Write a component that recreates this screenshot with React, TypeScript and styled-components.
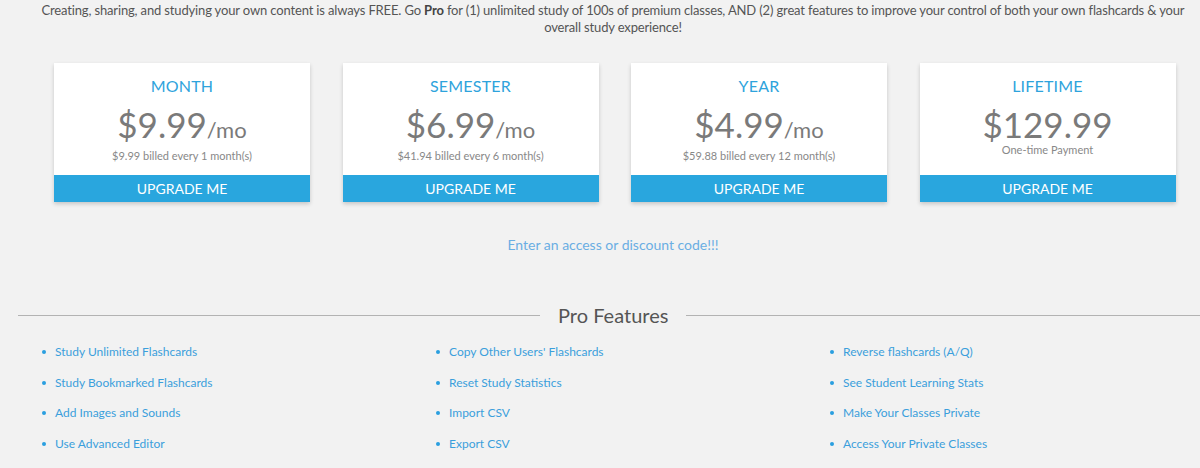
import styled, { createGlobalStyle } from 'styled-components'

const GlobalStyle = createGlobalStyle`
  html, body {
    margin: 0;
    padding: 0;
    background: #f2f2f2;
    overflow: hidden;
  }
  body {
    font-family: Lato, "Open Sans", Arial, sans-serif;
    color: #555;
  }
`

interface Plan {
  name: string
  price: string
  unit?: string
  note: string
}

const plans: Plan[] = [
  { name: 'MONTH', price: '$9.99', unit: '/mo', note: '$9.99 billed every 1 month(s)' },
  { name: 'SEMESTER', price: '$6.99', unit: '/mo', note: '$41.94 billed every 6 month(s)' },
  { name: 'YEAR', price: '$4.99', unit: '/mo', note: '$59.88 billed every 12 month(s)' },
  { name: 'LIFETIME', price: '$129.99', note: 'One-time Payment' },
]

const features: string[][] = [
  ['Study Unlimited Flashcards', 'Study Bookmarked Flashcards', 'Add Images and Sounds', 'Use Advanced Editor'],
  ["Copy Other Users' Flashcards", 'Reset Study Statistics', 'Import CSV', 'Export CSV'],
  ['Reverse flashcards (A/Q)', 'See Student Learning Stats', 'Make Your Classes Private', 'Access Your Private Classes'],
]

export default function App() {
  return (
    <>
      <GlobalStyle />
      <Page>
        <Intro>
          Creating, sharing, and studying your own content is always FREE. Go <b>Pro</b> for (1) unlimited
          study of 100s of premium classes, AND (2) great features to improve your control of both your own
          flashcards &amp; your overall study experience!
        </Intro>

        <PlanRow>
          {plans.map(plan => (
            <PlanCard key={plan.name}>
              <PlanBody>
                <PlanName>{plan.name}</PlanName>
                <Price>
                  {plan.price}
                  {plan.unit && <PriceUnit>{plan.unit}</PriceUnit>}
                </Price>
                <BillNote>{plan.note}</BillNote>
              </PlanBody>
              <UpgradeButton>UPGRADE ME</UpgradeButton>
            </PlanCard>
          ))}
        </PlanRow>

        <CodeLink>Enter an access or discount code!!!</CodeLink>

        <SectionHeading>
          <LeftRule />
          <HeadingText>Pro Features</HeadingText>
          <RightRule />
        </SectionHeading>

        <FeatureGrid>
          {features.map((col, i) => (
            <FeatureList key={i}>
              {col.map(item => (
                <FeatureItem key={item}>{item}</FeatureItem>
              ))}
            </FeatureList>
          ))}
        </FeatureGrid>
      </Page>
    </>
  )
}

const Page = styled.div`
  width: 1190px;
  margin-left: 18px;
  display: flex;
  flex-direction: column;
`

const Intro = styled.p`
  margin: 2px auto 0;
  width: 1160px;
  text-align: center;
  font-size: 13px;
  letter-spacing: -0.15px;
  line-height: 17px;
  color: #555;

  b {
    font-weight: 700;
    color: #444;
  }
`

const PlanRow = styled.div`
  display: grid;
  grid-template-columns: repeat(4, 256px);
  gap: 32.5px;
  padding-left: 36px;
  margin-top: 27px;
`

const PlanCard = styled.div`
  background: #fff;
  height: 139px;
  display: flex;
  flex-direction: column;
  box-shadow: 0 2px 4px rgba(0, 0, 0, 0.18);
`

const PlanBody = styled.div`
  flex: 1;
  display: flex;
  flex-direction: column;
  align-items: center;
  padding-top: 13px;
`

const PlanName = styled.div`
  font-size: 16px;
  line-height: 20px;
  color: #2ea3dc;
  letter-spacing: 0.2px;
`

const Price = styled.div`
  margin-top: 10px;
  font-size: 35px;
  line-height: 36px;
  color: #7a7a7a;
`

const PriceUnit = styled.span`
  font-size: 22px;
`

const BillNote = styled.div`
  margin-top: 1px;
  font-size: 11px;
  line-height: 14px;
  color: #888;
`

const UpgradeButton = styled.div`
  height: 27px;
  background: #29a6de;
  color: #fff;
  font-size: 14px;
  line-height: 27px;
  text-align: center;
`

const CodeLink = styled.div`
  margin-top: 34px;
  text-align: center;
  font-size: 14px;
  line-height: 18px;
  color: #6aaee3;
`

const SectionHeading = styled.div`
  margin-top: 49px;
  display: flex;
  align-items: center;
  height: 24px;
`

const LeftRule = styled.div`
  flex: 0 0 522px;
  height: 1px;
  background: #b3b3b3;
`

const RightRule = styled.div`
  flex: 1;
  height: 1px;
  background: #b3b3b3;
`

const HeadingText = styled.div`
  padding: 0 18px;
  font-size: 20px;
  line-height: 24px;
  color: #555;
`

const FeatureGrid = styled.div`
  display: grid;
  grid-template-columns: repeat(3, 394px);
  margin-top: 10px;
`

const FeatureList = styled.ul`
  list-style: none;
  margin: 0;
  padding: 0 0 0 25px;
`

const FeatureItem = styled.li`
  position: relative;
  padding-left: 12px;
  font-size: 12px;
  line-height: 30.6px;
  color: #3b9fdc;

  &::before {
    content: '';
    position: absolute;
    left: -1px;
    top: 13px;
    width: 4px;
    height: 4px;
    border-radius: 50%;
    background: #2a9fe0;
  }
`
